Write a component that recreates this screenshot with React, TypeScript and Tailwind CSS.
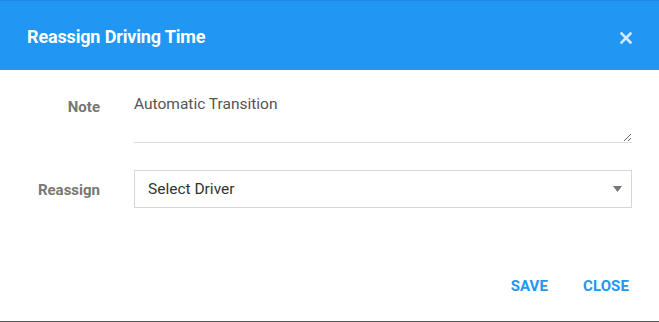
import { useState } from "react";

export default function App() {
  const [note, setNote] = useState("Automatic Transition");

  return (
    <div
      className="w-[659px] h-[322px] bg-white border-b border-[#555] flex flex-col"
      style={{ fontFamily: "Roboto, 'Liberation Sans', sans-serif" }}
    >
      {/* Header */}
      <div className="h-[70px] shrink-0 bg-[#2196f3] border-t border-[#1e88e5] flex items-center justify-between pl-[27px] pr-[27px]">
        <h1 className="text-[18px] font-bold text-white tracking-[-0.15px] pt-[2px]">
          Reassign Driving Time
        </h1>
        <button className="text-white/80 pt-[4px]">
          <svg width="12" height="12" viewBox="0 0 12 12">
            <path d="M1.5 1.5 L10.5 10.5 M10.5 1.5 L1.5 10.5" stroke="currentColor" strokeWidth="2.6" strokeLinecap="square" />
          </svg>
        </button>
      </div>

      {/* Body */}
      <div className="flex flex-col gap-[27px] pt-[22px] pr-[27px]">
        <div className="flex items-start">
          <label className="w-[100px] text-right text-[15px] font-bold text-[#777] pt-[4px]">Note</label>
          <textarea
            value={note}
            onChange={(e) => setNote(e.target.value)}
            className="ml-[34px] flex-1 h-[51px] border-0 border-b border-[#dddddd] outline-none text-[15.5px] text-[#555] leading-5 pt-[2px] px-0"
          />
        </div>
        <div className="flex items-center">
          <label className="w-[100px] text-right text-[15px] font-bold text-[#777] pt-[2px]">Reassign</label>
          <div className="ml-[34px] flex-1 h-[38px] border border-[#d5d5de] flex items-center justify-between pl-[13px] pr-[9px]">
            <span className="text-[15.5px] text-[#333] pt-[1px]">Select Driver</span>
            <svg width="9" height="6" viewBox="0 0 9 6">
              <path d="M0 0 H9 L4.5 6 Z" fill="#777" />
            </svg>
          </div>
        </div>
      </div>

      {/* Footer */}
      <div className="mt-auto mb-[24px] flex justify-end items-center gap-[35px] pr-[30px]">
        <button className="text-[15px] font-bold text-[#2196f3] tracking-[0.1px]">SAVE</button>
        <button className="text-[15px] font-bold text-[#2196f3] tracking-[0.1px]">CLOSE</button>
      </div>
    </div>
  );
}
